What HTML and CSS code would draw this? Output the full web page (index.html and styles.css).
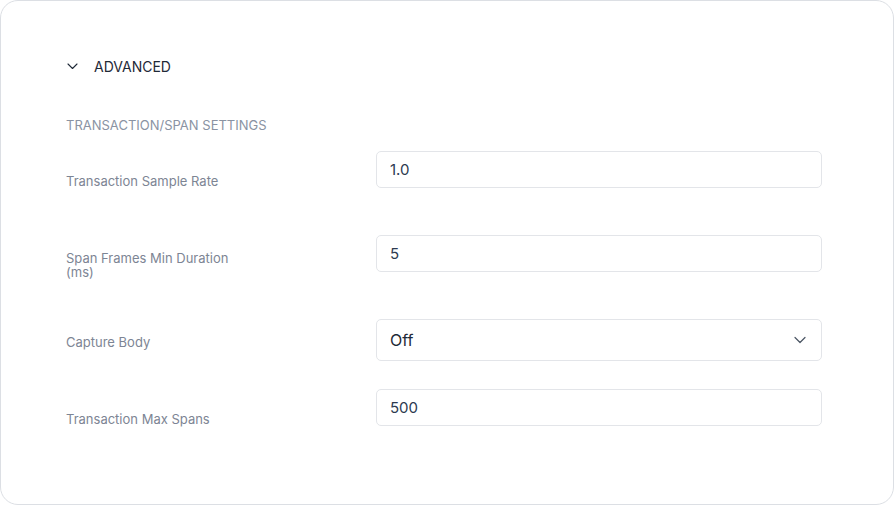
FILE: index.html
```html
<!DOCTYPE html>
<html>
<head>
<meta charset="utf-8">
<link rel="stylesheet" href="styles.css">
</head>
<body>
<div class="card">
  <div class="header">
    <svg class="chev" width="11" height="7" viewBox="0 0 11 7"><path d="M1 1 L5.5 5.5 L10 1" fill="none" stroke="#1f2937" stroke-width="1.1" stroke-linecap="round" stroke-linejoin="round"/></svg>
    <span class="title">ADVANCED</span>
  </div>
  <div class="section">TRANSACTION/SPAN SETTINGS</div>
  <div class="row row1">
    <div class="label">Transaction Sample Rate</div>
    <div class="field input">1.0</div>
  </div>
  <div class="row row2">
    <div class="label">Span Frames Min Duration<br>(ms)</div>
    <div class="field input">5</div>
  </div>
  <div class="row row3">
    <div class="label">Capture Body</div>
    <div class="field select"><span>Off</span>
      <svg width="12" height="8" viewBox="0 0 12 8"><path d="M1 1.5 L6 6.5 L11 1.5" fill="none" stroke="#4b5563" stroke-width="1.2" stroke-linecap="round" stroke-linejoin="round"/></svg>
    </div>
  </div>
  <div class="row row4">
    <div class="label">Transaction Max Spans</div>
    <div class="field input">500</div>
  </div>
</div>
</body>
</html>
```
FILE: styles.css
```css
* { box-sizing: border-box; }
html, body { margin: 0; padding: 0; background: #ffffff; }
body { font-family: Inter, "Noto Sans", sans-serif; }
.card {
  width: 894px;
  height: 505px;
  border: 1.5px solid #dcdfe4;
  border-radius: 18px;
  padding: 55px 72px 0 65px;
  background: #fff;
}
.header {
  display: flex;
  align-items: center;
  height: 20px;
}
.chev { margin-left: 1px; margin-right: 16px; }
.title {
  font-size: 14px;
  color: #1f2937;
}
.section {
  margin-top: 41px;
  font-size: 13px;
  line-height: 16px;
  color: #8a93a3;
}
.row {
  display: grid;
  grid-template-columns: 310px 446px;
  align-items: start;
}
.label {
  font-size: 13px;
  line-height: 14px;
  color: #7d8594;
}
.row1 { margin-top: 18px; }
.row1 .label { padding-top: 23px; }
.row2 { margin-top: 47px; }
.row2 .label { padding-top: 16px; line-height: 14px; }
.row3 { margin-top: 40px; }
.row3 .label { padding-top: 16px; }
.row4 { margin-top: 28px; }
.row4 .label { padding-top: 23px; }
.field {
  border: 1px solid #e3e5e9;
  border-radius: 5px;
  display: flex;
  align-items: center;
  padding: 0 13px;
}
.input {
  height: 37px;
  font-size: 15px;
  color: #2d3a50;
}
.select {
  height: 42px;
  justify-content: space-between;
  font-size: 16px;
  color: #1f2937;
  padding-right: 15px;
}
```
